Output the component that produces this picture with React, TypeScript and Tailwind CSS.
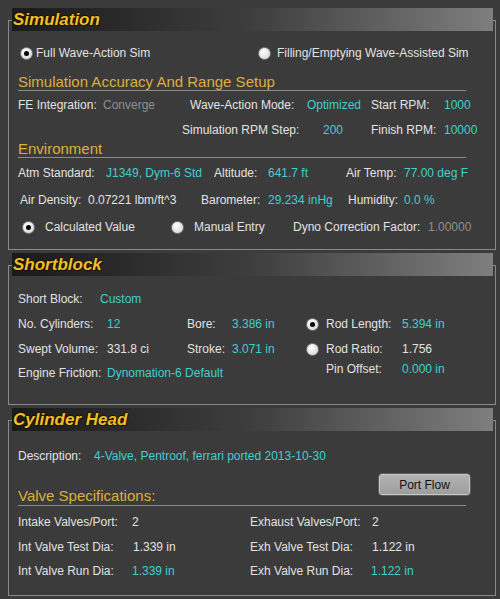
import { ReactNode } from "react";

const label = "text-[#e2e2e2]";
const cyan = "text-[#3fcfcf]";
const dim = "text-[#8e8e8e]";

const Cell = ({ className, children }: { className?: string; children: ReactNode }) => (
	<span className={`shrink-0 whitespace-nowrap ${className ?? ""}`}>{children}</span>
);

const Radio = ({ on, className }: { on?: boolean; className?: string }) => (
	<span
		className={`flex h-[13px] w-[13px] shrink-0 items-center justify-center rounded-full border border-[#7a7a7a] bg-[radial-gradient(circle_at_40%_35%,#ffffff,#cfcfcf)] ${className ?? ""}`}
	>
		{on && <span className="h-[5px] w-[5px] rounded-full bg-black" />}
	</span>
);

const Row = ({ className, children }: { className?: string; children: ReactNode }) => (
	<div className={`flex h-[18px] items-center ${className ?? ""}`}>{children}</div>
);

const SubHeading = ({ className, children }: { className?: string; children: ReactNode }) => (
	<div
		className={`flex h-[19px] w-[448px] items-center border-b border-[#8a8a8a] text-[15px] text-[#dcb03c] ${className ?? ""}`}
	>
		{children}
	</div>
);

const Section = ({
	title,
	className,
	children,
}: {
	title: string;
	className?: string;
	children: ReactNode;
}) => (
	<div className={`border border-[#8a8a8a] pl-[9px] ${className ?? ""}`}>
		<div className="-mt-[13px] mr-[2px] -ml-[6px] flex h-[23px] items-center bg-[linear-gradient(to_right,#1a1a1a,#3e3e3e_50%,#7e7e7e)] pl-[1px]">
			<span className="text-[17px] font-bold italic text-[#f0bf2c] [text-shadow:1px_1px_0_#1a1200,-1px_0_0_#1a1200,0_-1px_0_#1a1200]">
				{title}
			</span>
		</div>
		{children}
	</div>
);

export default function App() {
	return (
		<div className="min-h-screen bg-[#3b3b3b] pt-[20px] pr-[4px] pl-[8px] font-['Liberation_Sans',Arial,sans-serif] text-[12px] leading-none">
			<Section title="Simulation" className="pb-[13px]">
				<Row className="mt-[13px]">
					<Radio on className="ml-[2px]" />
					<Cell className={`ml-[3px] w-[222px] ${label}`}>Full Wave-Action Sim</Cell>
					<Radio />
					<Cell className={`ml-[6px] ${label}`}>Filling/Emptying Wave-Assisted Sim</Cell>
				</Row>

				<SubHeading className="mt-[10px]">Simulation Accuracy And Range Setup</SubHeading>

				<Row className="mt-[5px]">
					<Cell className={`w-[85px] ${label}`}>FE Integration:</Cell>
					<Cell className={`w-[87px] ${dim}`}>Converge</Cell>
					<Cell className={`w-[117px] ${label}`}>Wave-Action Mode:</Cell>
					<Cell className={`w-[64px] ${cyan}`}>Optimized</Cell>
					<Cell className={`w-[73px] ${label}`}>Start RPM:</Cell>
					<Cell className={cyan}>1000</Cell>
				</Row>
				<Row className="mt-[7px]">
					<Cell className={`ml-[164px] w-[141px] ${label}`}>Simulation RPM Step:</Cell>
					<Cell className={`w-[48px] ${cyan}`}>200</Cell>
					<Cell className={`w-[73px] ${label}`}>Finish RPM:</Cell>
					<Cell className={cyan}>10000</Cell>
				</Row>

				<SubHeading>Environment</SubHeading>

				<Row className="mt-[6px]">
					<Cell className={`w-[88px] ${label}`}>Atm Standard:</Cell>
					<Cell className={`w-[108px] ${cyan}`}>J1349, Dym-6 Std</Cell>
					<Cell className={`w-[54px] ${label}`}>Altitude:</Cell>
					<Cell className={`w-[78px] ${cyan}`}>641.7 ft</Cell>
					<Cell className={`w-[58px] ${label}`}>Air Temp:</Cell>
					<Cell className={cyan}>77.00 deg F</Cell>
				</Row>
				<Row className="mt-[9px]">
					<Cell className={`ml-[2px] w-[68px] ${label}`}>Air Density:</Cell>
					<Cell className={`w-[113px] ${label}`}>0.07221 lbm/ft^3</Cell>
					<Cell className={`w-[67px] ${label}`}>Barometer:</Cell>
					<Cell className={`w-[80px] ${cyan}`}>29.234 inHg</Cell>
					<Cell className={`w-[56px] ${label}`}>Humidity:</Cell>
					<Cell className={cyan}>0.0 %</Cell>
				</Row>
				<Row className="mt-[9px]">
					<Radio on className="ml-[4px]" />
					<Cell className={`ml-[10px] w-[126px] ${label}`}>Calculated Value</Cell>
					<Radio />
					<Cell className={`ml-[10px] w-[99px] ${label}`}>Manual Entry</Cell>
					<Cell className={`w-[135px] ${label}`}>Dyno Correction Factor:</Cell>
					<Cell className={dim}>1.00000</Cell>
				</Row>
			</Section>

			<Section title="Shortblock" className="mt-[15px] pb-[22px]">
				<div className="flex">
					<div className="flex w-[288px] flex-col">
						<Row className="mt-[14px]">
							<Cell className={`w-[82px] ${label}`}>Short Block:</Cell>
							<Cell className={cyan}>Custom</Cell>
						</Row>
						<Row className="mt-[7px]">
							<Cell className={`w-[89px] ${label}`}>No. Cylinders:</Cell>
							<Cell className={`w-[80px] ${cyan}`}>12</Cell>
							<Cell className={`w-[45px] ${label}`}>Bore:</Cell>
							<Cell className={cyan}>3.386 in</Cell>
						</Row>
						<Row className="mt-[7px]">
							<Cell className={`w-[89px] ${label}`}>Swept Volume:</Cell>
							<Cell className={`w-[80px] ${label}`}>331.8 ci</Cell>
							<Cell className={`w-[45px] ${label}`}>Stroke:</Cell>
							<Cell className={cyan}>3.071 in</Cell>
						</Row>
						<Row className="mt-[6px]">
							<Cell className={`w-[89px] ${label}`}>Engine Friction:</Cell>
							<Cell className={cyan}>Dynomation-6 Default</Cell>
						</Row>
					</div>
					<div className="flex flex-col">
						<Row className="mt-[39px]">
							<Radio on />
							<Cell className={`ml-[7px] w-[76px] ${label}`}>Rod Length:</Cell>
							<Cell className={cyan}>5.394 in</Cell>
						</Row>
						<Row className="mt-[7px]">
							<Radio />
							<Cell className={`ml-[7px] w-[76px] ${label}`}>Rod Ratio:</Cell>
							<Cell className={label}>1.756</Cell>
						</Row>
						<Row className="mt-[2px]">
							<Cell className={`ml-[20px] w-[76px] ${label}`}>Pin Offset:</Cell>
							<Cell className={cyan}>0.000 in</Cell>
						</Row>
					</div>
				</div>
			</Section>

			<Section title="Cylinder Head" className="mt-[15px] pb-[15px]">
				<Row className="mt-[16px]">
					<Cell className={`w-[76px] ${label}`}>Description:</Cell>
					<Cell className={cyan}>4-Valve, Pentroof, ferrari ported 2013-10-30</Cell>
				</Row>

				<div className="mt-[8px] flex h-[32px] w-[453px]">
					<span className="w-[360px] self-end pb-[1px] text-[15px] leading-[17px] text-[#dcb03c]">
						Valve Specifications:
					</span>
					<button
						type="button"
						className="h-[23px] w-[93px] rounded-[4px] border border-[#5c5c5c] bg-linear-to-b from-[#b4b4b4] to-[#9c9c9c] text-[12px] text-[#111] shadow-[inset_0_0_0_1px_#c8c8c8]"
					>
						Port Flow
					</button>
				</div>
				<div className="h-px w-[448px] bg-[#8a8a8a]" />

				<Row className="mt-[7px]">
					<Cell className={`w-[114px] ${label}`}>Intake Valves/Port:</Cell>
					<Cell className={`w-[118px] ${label}`}>2</Cell>
					<Cell className={`w-[122px] ${label}`}>Exhaust Valves/Port:</Cell>
					<Cell className={label}>2</Cell>
				</Row>
				<Row className="mt-[7px]">
					<Cell className={`w-[115px] ${label}`}>Int Valve Test Dia:</Cell>
					<Cell className={`w-[117px] ${label}`}>1.339 in</Cell>
					<Cell className={`w-[122px] ${label}`}>Exh Valve Test Dia:</Cell>
					<Cell className={label}>1.122 in</Cell>
				</Row>
				<Row className="mt-[6px]">
					<Cell className={`w-[114px] ${label}`}>Int Valve Run Dia:</Cell>
					<Cell className={`w-[118px] ${cyan}`}>1.339 in</Cell>
					<Cell className={`w-[121px] ${label}`}>Exh Valve Run Dia:</Cell>
					<Cell className={cyan}>1.122 in</Cell>
				</Row>
			</Section>
		</div>
	);
}
